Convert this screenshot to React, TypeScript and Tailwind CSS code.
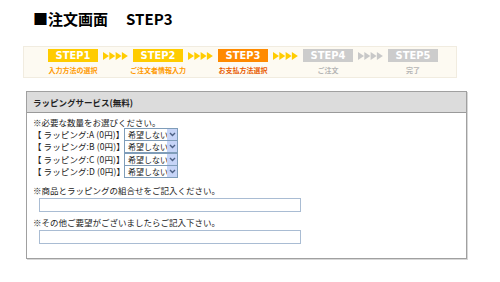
import React from "react";

const jp = { fontFamily: '"Noto Sans CJK JP", "Noto Sans", sans-serif' };

function Arrows({ color }: { color: string }) {
  return (
    <svg width="25" height="8" viewBox="0 0 25 8">
      {[0, 6.3, 12.6, 18.9].map((x) => (
        <polygon key={x} points={`${x},0 ${x + 6},4 ${x},8`} fill={color} />
      ))}
    </svg>
  );
}

function Select() {
  return (
    <div className="flex h-[13px] w-[54px] items-center overflow-hidden border border-[#7f9db9] bg-white">
      <span className="flex-1 overflow-hidden whitespace-nowrap pl-[3px] text-[8px] leading-[11px] text-[#222]">希望しない</span>
      <span className="flex h-[11px] w-[10px] shrink-0 items-center justify-center bg-[#c6d4f7]">
        <svg width="7" height="5" viewBox="0 0 7 5">
          <polyline points="1,1 3.5,3.5 6,1" fill="none" stroke="#4d6185" strokeWidth="1.4" />
        </svg>
      </span>
    </div>
  );
}

const steps = [
  { n: "STEP1", label: "入力方法の選択", box: "bg-[#ffcc00]", text: "text-[#ff9900]" },
  { n: "STEP2", label: "ご注文者情報入力", box: "bg-[#ffcc00]", text: "text-[#ff9900]" },
  { n: "STEP3", label: "お支払方法選択", box: "bg-[#ff8a00]", text: "text-[#e85a00]" },
  { n: "STEP4", label: "ご注文", box: "bg-[#cccccc]", text: "text-[#b5b5b5]" },
  { n: "STEP5", label: "完了", box: "bg-[#cccccc]", text: "text-[#b5b5b5]" },
];

export default function App() {
  return (
    <div className="relative h-[282px] w-[500px] overflow-hidden bg-white" style={jp}>
      <div className="pl-[33px] pt-[10px] text-[15px] font-bold leading-[18px] text-black">
        ■注文画面<span className="ml-[18px]">STEP3</span>
      </div>

      <div className="ml-[23px] mt-[18px] h-[32px] w-[434px] border border-[#f1ece0] bg-[#fdfaf2] pl-[24px] pt-[2px]">
        <div className="flex items-center">
          {steps.map((s, i) => (
            <React.Fragment key={s.n}>
              <div
                className={`flex h-[13px] w-[50px] items-center justify-center ${s.box} text-[11px] font-bold leading-[13px] text-white`}
                style={{ fontFamily: '"Liberation Sans Narrow", "DejaVu Sans Condensed", sans-serif' }}
              >
                {s.n}
              </div>
              {i < 4 && (
                <div className="flex w-[35px] justify-center">
                  <Arrows color={i < 3 ? "#ffcc00" : "#c8c8c8"} />
                </div>
              )}
            </React.Fragment>
          ))}
        </div>
        <div className="mt-[2px] flex gap-[35px]">
          {steps.map((s) => (
            <div key={s.n} className="flex w-[50px] justify-center">
              <span className={`whitespace-nowrap text-[7px] font-bold leading-[12px] ${s.text}`}>{s.label}</span>
            </div>
          ))}
        </div>
      </div>

      <div className="ml-[26px] mt-[13px] w-[441px] border border-[#a0a0a0] shadow-[1px_1px_0_#d8d8d8]">
        <div className="flex h-[21px] items-center border-b border-[#9a9a9a] bg-[#dcdcdc] pl-[6px]">
          <span className="text-[8.5px] font-bold leading-[11px] text-[#222]">ラッピングサービス(無料)</span>
        </div>
        <div className="pb-[14px] pl-[6px] pt-[4px] text-[8.5px] leading-[11px] text-[#222]">
          <div className="h-[11px]">※必要な数量をお選びください。</div>
          <div className="flex flex-col">
            {["A", "B", "C", "D"].map((k) => (
              <div key={k} className="flex h-[12.5px] items-center">
                <span className="w-[91px] whitespace-nowrap text-[8.5px] tracking-[0.1px]">【 ラッピング:{k} (0円)】</span>
                <Select />
              </div>
            ))}
          </div>
          <div className="mt-[7px] h-[11px]">※商品とラッピングの組合せをご記入ください。</div>
          <div className="ml-[6px] mt-[2px] h-[14px] w-[262px] border border-[#a9bcd3] bg-white" />
          <div className="mt-[5px] h-[11px]">※その他ご要望がございましたらご記入下さい。</div>
          <div className="ml-[6px] mt-[2px] h-[14px] w-[262px] border border-[#a9bcd3] bg-white" />
        </div>
      </div>
    </div>
  );
}
